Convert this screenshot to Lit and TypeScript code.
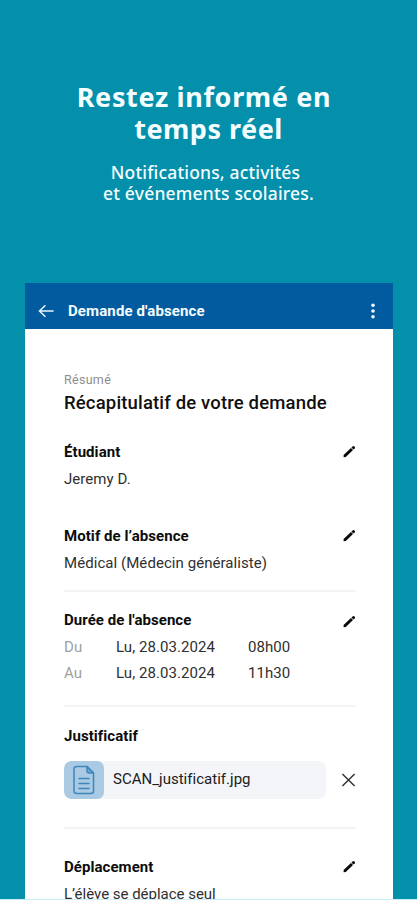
import { LitElement, html, css, nothing } from "lit";
import { customElement, property } from "lit/decorators.js";

@customElement("pencil-icon")
class PencilIcon extends LitElement {
  static styles = css`
    :host { display: block; width: 13px; height: 13px; }
    svg { display: block; fill: #0b0b0b; }
  `;
  render() {
    return html`<svg width="13" height="13" viewBox="0 0 13 13">
      <path d="M0.6 10 L7.9 3 L10 5.1 L2.8 12 L0.6 12.3 Z" />
      <path d="M8.4 2.6 L9.9 1.2 Q10.5 0.7 11.1 1.2 L11.9 2 Q12.3 2.6 11.8 3.2 L10.4 4.6 Z" />
    </svg>`;
  }
}

@customElement("summary-section")
class SummarySection extends LitElement {
  @property() heading = "";
  @property({ type: Boolean }) editable = false;
  static styles = css`
    :host { display: block; box-sizing: border-box; }
    .head { display: flex; justify-content: space-between; height: 20px; }
    .title { font-size: 15px; line-height: 20px; font-weight: 700; color: #0c0c0c; white-space: nowrap; letter-spacing: 0.06px; }
    pencil-icon { margin: var(--pencil-top, 3px) 0 0; }
  `;
  render() {
    return html`<div class="head">
        <span class="title">${this.heading}</span>
        ${this.editable ? html`<pencil-icon></pencil-icon>` : nothing}
      </div>
      <slot></slot>`;
  }
}

@customElement("app-root")
class AppRoot extends LitElement {
  static styles = css`
    :host {
      display: block; width: 417px; height: 900px; overflow: hidden;
      font-family: Roboto, "Liberation Sans", sans-serif;
    }
    .page { display: flex; flex-direction: column; box-sizing: border-box; width: 417px; height: 900px; background: #048fab; border-bottom: 1px solid #c9eef6; }
    .hero { height: 283px; box-sizing: border-box; padding-top: 81px; color: #f5feff; text-align: center; font-family: "Noto Sans", "Open Sans", sans-serif; flex: none; }
    h1 { margin: 0; font-size: 27px; line-height: 32px; font-weight: 700; }
    .l1, .l2, .s1, .s2 { display: block; white-space: nowrap; }
    .l1 { letter-spacing: 0.65px; padding-right: 9px; }
    .l2 { letter-spacing: 0.5px; }
    .sub { margin: 17px 0 0; font-size: 17.5px; line-height: 21px; font-weight: 500; }
    .s1 { padding-right: 6px; letter-spacing: 0.16px; }
    .s2 { letter-spacing: 0.2px; }
    .device { margin: 0 24px 0 25px; background: #fff; height: 616px; flex: none; overflow: hidden; }
    .bar { display: flex; align-items: center; height: 46px; box-sizing: border-box; padding: 9px 17px 0 13px; background: #025b9f; color: #f4fbff; }
    .bar svg { display: block; flex: none; }
    .bar-title { flex: 1; margin-left: 14px; font-size: 15px; line-height: 20px; font-weight: 700; white-space: nowrap; letter-spacing: 0.12px; }
    .content { padding: 42px 37px 0 39px; color: #303030; }
    .eyebrow { font-size: 12.5px; line-height: 18px; color: #8d8d8d; height: 19px; letter-spacing: 0.3px; }
    .main-title { font-size: 18.5px; line-height: 26px; height: 26px; font-weight: 500; color: #101010; white-space: nowrap; margin-bottom: 26px; letter-spacing: 0.16px; }
    .text { font-size: 15px; line-height: 20px; height: 20px; margin-top: 7px; white-space: nowrap; letter-spacing: 0.06px; }
    .student { height: 84px; }
    .reason { height: 64px; }
    .duration { height: 95px; margin-top: 18px; --pencil-top: 5px; }
    .proof { height: 101px; margin-top: 19px; }
    .travel { margin-top: 28px; }
    .travel .text { letter-spacing: -0.02px; }
    .rule { height: 2px; background: #f3f4f5; }
    .times { display: grid; grid-template-columns: 52px 132px auto; font-size: 15px; line-height: 26px; padding-top: 4px; letter-spacing: 0.06px; }
    .muted { color: #a0a0a0; }
    .file { display: flex; align-items: center; margin-top: 15px; }
    .chip { display: flex; width: 262px; height: 38px; border-radius: 7px; background: #f3f5f9; overflow: hidden; flex: none; }
    .thumb { display: flex; align-items: center; justify-content: center; width: 40px; background: #a9cae2; border-radius: 7px; }
    .name { margin-left: 9px; line-height: 36px; font-size: 15px; color: #202020; letter-spacing: 0.02px; }
    .close { margin-left: 15px; }
  `;

  render() {
    return html`<div class="page">
      <header class="hero">
        <h1><span class="l1">Restez informé en</span><span class="l2">temps réel</span></h1>
        <p class="sub"><span class="s1">Notifications, activités</span><span class="s2">et événements scolaires.</span></p>
      </header>
      <main class="device">
        <div class="bar">
          <svg width="16" height="14" viewBox="0 0 16 14" fill="none" stroke="#e9f5ff" stroke-width="1.5">
            <path d="M15.6 7H1.6M7.4 1.2L1.5 7l5.9 5.8" />
          </svg>
          <span class="bar-title">Demande d'absence</span>
          <svg width="6" height="18" viewBox="0 0 6 18" fill="#f2faff">
            <circle cx="3" cy="3.2" r="1.8" /><circle cx="3" cy="9" r="1.8" /><circle cx="3" cy="14.8" r="1.8" />
          </svg>
        </div>
        <div class="content">
          <div class="eyebrow">Résumé</div>
          <div class="main-title">Récapitulatif de votre demande</div>
          <summary-section class="student" heading="Étudiant" editable>
            <div class="text">Jeremy D.</div>
          </summary-section>
          <summary-section class="reason" heading="Motif de l’absence" editable>
            <div class="text">Médical (Médecin généraliste)</div>
          </summary-section>
          <div class="rule"></div>
          <summary-section class="duration" heading="Durée de l'absence" editable>
            <div class="times">
              <span class="muted">Du</span><span>Lu, 28.03.2024</span><span>08h00</span>
              <span class="muted">Au</span><span>Lu, 28.03.2024</span><span>11h30</span>
            </div>
          </summary-section>
          <div class="rule"></div>
          <summary-section class="proof" heading="Justificatif">
            <div class="file">
              <div class="chip">
                <div class="thumb">
                  <svg width="22" height="30" viewBox="0 0 22 30" fill="none" stroke="#3f86bb" stroke-width="1.5" stroke-linejoin="round" stroke-linecap="round">
                    <path d="M3.5 1.5H14L20.5 8V26Q20.5 28.5 18 28.5H3.5Q1 28.5 1 26V4Q1 1.5 3.5 1.5Z" />
                    <path d="M14 1.5V6Q14 8 16 8H20.5Z" fill="#6aa3cd" />
                    <path d="M6 13.5H16M6 18.5H16M6 23.5H16" />
                  </svg>
                </div>
                <span class="name">SCAN_justificatif.jpg</span>
              </div>
              <svg class="close" width="16" height="16" viewBox="0 0 16 16" fill="none" stroke="#303030" stroke-width="1.5">
                <path d="M1.5 1.5L14.5 14.5M14.5 1.5L1.5 14.5" />
              </svg>
            </div>
          </summary-section>
          <div class="rule"></div>
          <summary-section class="travel" heading="Déplacement" editable>
            <div class="text">L’élève se déplace seul</div>
          </summary-section>
        </div>
      </main>
    </div>`;
  }
}
